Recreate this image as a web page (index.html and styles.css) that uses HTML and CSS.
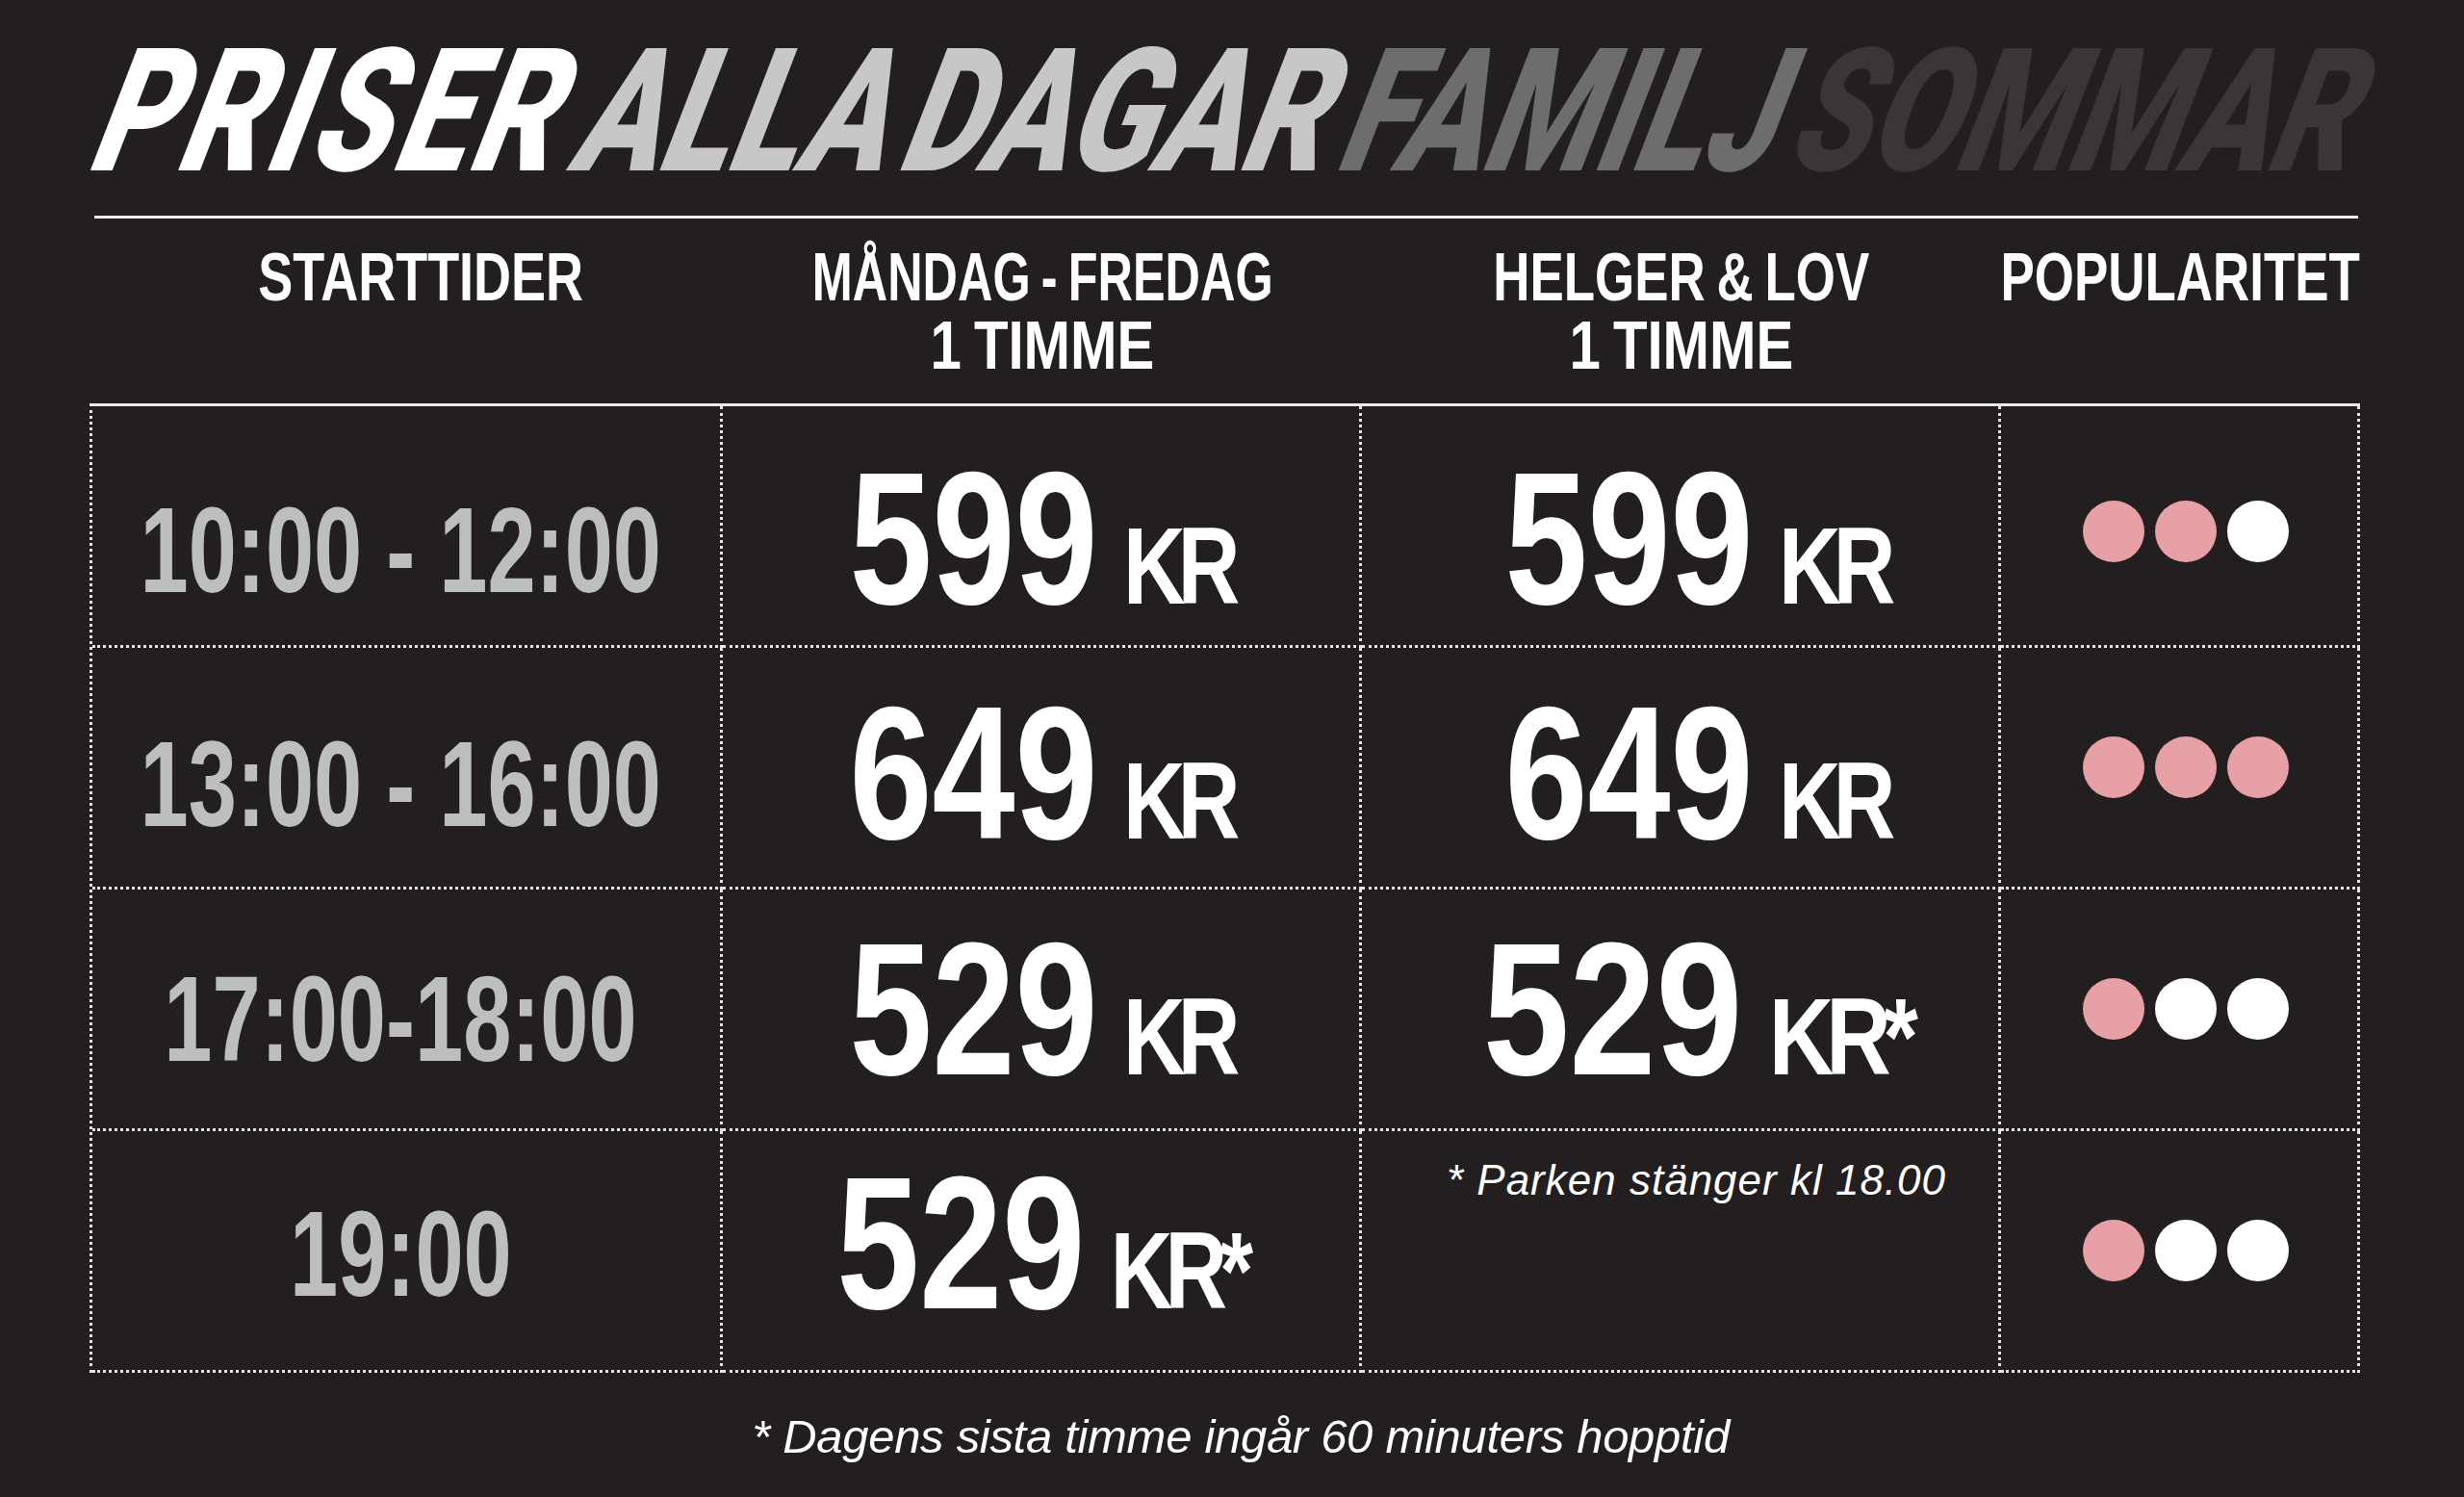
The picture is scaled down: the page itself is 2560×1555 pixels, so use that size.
FILE: index.html
```html
<!DOCTYPE html>
<html lang="sv">
<head>
<meta charset="utf-8">
<title>Priser alla dagar – Familj sommar</title>
<link rel="stylesheet" href="styles.css">
</head>
<body>
<div class="page">
  <h1 class="title"><span class="title-in"><span class="w-1">PRISER</span> <span class="w-2">ALLA DAGAR</span> <span class="w-3">FAMILJ</span> <span class="w-4">SOMMAR</span></span></h1>
  <div class="rule"></div>

  <div class="head">
    <div class="hcell h1c"><span class="hl wide">STARTTIDER</span></div>
    <div class="hcell"><span class="hl narrow">MÅNDAG - FREDAG</span><span class="hl sub">1 TIMME</span></div>
    <div class="hcell"><span class="hl">HELGER &amp; LOV</span><span class="hl sub">1 TIMME</span></div>
    <div class="hcell"><span class="hl">POPULARITET</span></div>
  </div>

  <div class="grid">
    <div class="row r1">
      <div class="cell time"><span class="tm">10:00 - 12:00</span></div>
      <div class="cell wk"><span class="price">599<span class="kr"> KR</span></span></div>
      <div class="cell we"><span class="price">599<span class="kr"> KR</span></span></div>
      <div class="cell pop"><span class="dot on"></span><span class="dot on"></span><span class="dot"></span></div>
    </div>
    <div class="row r2">
      <div class="cell time"><span class="tm">13:00 - 16:00</span></div>
      <div class="cell wk"><span class="price">649<span class="kr"> KR</span></span></div>
      <div class="cell we"><span class="price">649<span class="kr"> KR</span></span></div>
      <div class="cell pop"><span class="dot on"></span><span class="dot on"></span><span class="dot on"></span></div>
    </div>
    <div class="row r3">
      <div class="cell time"><span class="tm">17:00-18:00</span></div>
      <div class="cell wk"><span class="price">529<span class="kr"> KR</span></span></div>
      <div class="cell we"><span class="price wide">529<span class="kr"> KR*</span></span></div>
      <div class="cell pop"><span class="dot on"></span><span class="dot"></span><span class="dot"></span></div>
    </div>
    <div class="row r4">
      <div class="cell time"><span class="tm">19:00</span></div>
      <div class="cell wk"><span class="price">529<span class="kr"> KR*</span></span></div>
      <div class="cell we note"><span class="note-text">* Parken stänger kl 18.00</span></div>
      <div class="cell pop"><span class="dot on"></span><span class="dot"></span><span class="dot"></span></div>
    </div>
  </div>

  <p class="foot">* Dagens sista timme ingår 60 minuters hopptid</p>
</div>
</body>
</html>
```

FILE: styles.css
```css
html, body {
  margin: 0;
  overflow: hidden;
}

body {
  background: #231f20;
  color: #ffffff;
  font-family: "Liberation Sans", Arial, sans-serif;
}

.page {
  width: 2359px;
  padding: 50px 0 0 93px;
}

/* ---------- title ---------- */
.title {
  margin: 0 0 0 17px;
  font-family: Roboto, "Liberation Sans", sans-serif;
  font-weight: 900;
  font-size: 132.5px;
  line-height: 132px;
  white-space: nowrap;
  word-spacing: -18px;
}

.title-in {
  display: inline-block;
  transform: skewX(-21deg) scaleY(1.35);
}

.w-1 { color: #ffffff; letter-spacing: 5px; }
.w-2 { color: #c7c7c8; }
.w-3 { color: #6d6d70; }
.w-4 { color: #3a3637; }

.rule {
  height: 3px;
  margin: 42px 2px 0 5px;
  background: #ececec;
}

/* ---------- header ---------- */
.head {
  display: grid;
  grid-template-columns: 658px 664px 664px 373px;
  margin-top: 24px;
  height: 142px;
}

.hcell {
  display: flex;
  flex-direction: column;
  align-items: center;
  padding-top: 4.5px;
  font-weight: 700;
  font-size: 63px;
  line-height: 62px;
  word-spacing: -3.5px;
}

.h1c { padding-left: 30px; }

.hl {
  display: block;
  white-space: nowrap;
  transform: scale(0.84, 1.127);
}

.hl.wide { transform: scale(0.857, 1.127); }
.hl.narrow { transform: scale(0.8, 1.127); }
.hl.sub {
  margin-top: 9px;
  transform: scale(0.924, 1.127);
}

/* ---------- table ---------- */
.grid {
  display: grid;
  grid-template-columns: 655px 664px 664px 373px;
  margin-top: 26px;
  border-top: 3px solid #ececec;
  border-left: 3px dotted #e4e4e4;
}

.row {
  display: contents;
}

.cell {
  box-sizing: border-box;
  height: 251px;
  display: flex;
  align-items: center;
  justify-content: center;
  border-right: 3px dotted #e4e4e4;
  border-bottom: 3px dotted #e4e4e4;
}

.time { padding-right: 12px; }
.we { padding-left: 34px; }
.pop { padding-left: 14px; gap: 11px; }

.tm {
  display: inline-block;
  font-weight: 700;
  font-size: 127px;
  line-height: 1;
  color: #bcbec0;
  white-space: nowrap;
  transform: scaleX(0.71);
}

.price {
  display: inline-block;
  font-weight: 700;
  font-size: 197px;
  line-height: 1;
  color: #ffffff;
  white-space: nowrap;
  transform: scaleX(0.785);
}

.price.wide {
  transform: scaleX(0.82);
}

.kr {
  padding-left: 12px;
  font-size: 114px;
  letter-spacing: -10px;
}

.dot {
  width: 64px;
  height: 64px;
  border-radius: 50%;
  background: #ffffff;
}

.dot.on {
  background: #e8a0a7;
}

/* per-row vertical placement of the figures */
.r1 .time { padding-top: 50px; }
.r2 .time { padding-top: 34px; }
.r3 .time { padding-top: 20px; }
.r4 .time { padding-top: 6px; }

.r1 .wk, .r1 .we { padding-top: 26px; }
.r2 .wk, .r2 .we { padding-top: 12px; }
.r4 .wk { padding-bottom: 16px; }

.r1 .pop { padding-top: 12px; }

.cell.note {
  align-items: flex-start;
  padding-top: 26px;
}

.note-text {
  font-style: italic;
  font-weight: 400;
  font-size: 44px;
  line-height: 50px;
  letter-spacing: 1px;
  white-space: nowrap;
}

/* ---------- footnote ---------- */
.foot {
  margin: 36px 0 0;
  padding-left: 33px;
  text-align: center;
  font-style: italic;
  font-weight: 400;
  font-size: 49px;
  line-height: 60px;
  letter-spacing: -0.3px;
}
```
